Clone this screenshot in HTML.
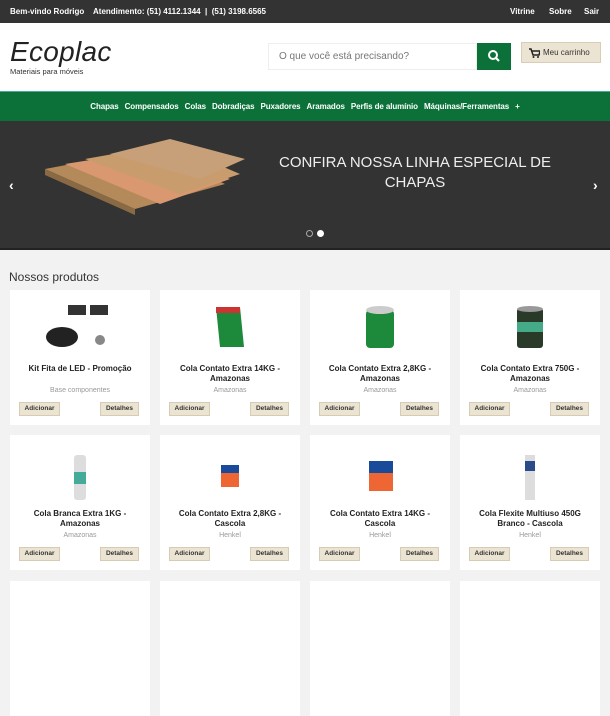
<!DOCTYPE html>
<html><head><meta charset="utf-8"><style>
*{margin:0;padding:0;box-sizing:border-box}
body{width:610px;height:609px;overflow:hidden;background:#f2f2f2;font-family:"Liberation Sans",sans-serif;position:relative}
.top{position:absolute;left:0;top:0;width:610px;height:23px;background:#333;color:#fff;font-size:8px;font-weight:bold}
.top span{position:absolute;top:7px}
.hdr{position:absolute;top:23px;left:0;width:610px;height:68px;background:#fff}
.logo{position:absolute;left:10px;top:13px;font-size:28px;color:#222;font-style:italic;letter-spacing:0.3px;font-weight:normal}
.logo small{position:absolute;left:0;top:31px;font-size:7.5px;font-style:normal;letter-spacing:0;white-space:nowrap;color:#333}
.search{position:absolute;left:268px;top:20px;width:209px;height:27px;border:1px solid #eee;background:#fff;font-size:10px;color:#777;padding:7px 10px}
.sbtn{position:absolute;left:477px;top:20px;width:34px;height:27px;background:#0b7139}
.cart{position:absolute;left:521px;top:19px;width:80px;height:21px;background:#ece4d2;border:1px solid #d8ceb8;font-size:8px;color:#333;padding:5px 0 0 21px}
.nav{position:absolute;top:91px;left:0;width:610px;height:30px;background:#0b7139;border-top:1px solid #4a9;color:#fff;font-size:8px;font-weight:bold;text-align:center;padding-top:10px;letter-spacing:-0.1px}
.nav b{margin:0 3px}
.slide{position:absolute;top:121px;left:0;width:610px;height:129px;background:#333;border-bottom:2px solid #222}
.stxt{position:absolute;left:270px;top:32px;width:290px;text-align:center;color:#eee;font-size:15px;line-height:20px}
.arr{position:absolute;top:56px;color:#fff;font-size:14px;font-weight:bold}
.h2{position:absolute;left:9px;top:270px;font-size:12px;color:#333}
.card{position:absolute;width:140px;height:135px;background:#fff}
.t{position:absolute;left:6px;right:6px;top:74px;text-align:center;font-size:8px;font-weight:bold;line-height:10px;color:#222}
.b{position:absolute;left:0;right:0;top:97px;text-align:center;font-size:7px;color:#999}
.btn{position:absolute;top:112px;height:14px;background:#ece4d2;border:1px solid #d6ccb4;font-size:6.5px;font-weight:bold;color:#333;text-align:center;line-height:12px}
.a{left:9px;width:41px}.d{left:90px;width:39px}
.img{position:absolute;left:50%;top:12px;transform:translateX(-50%)}
</style></head><body>
<div class="top"><span style="left:10px">Bem-vindo Rodrigo</span><span style="left:93px">Atendimento: (51) 4112.1344 &nbsp;| &nbsp;(51) 3198.6565</span><span style="left:510px">Vitrine</span><span style="left:549px">Sobre</span><span style="left:584px">Sair</span></div>
<div class="hdr">
<div class="logo">Ecoplac<small>Materiais para móveis</small></div>
<div class="search">O que você está precisando?</div>
<div class="sbtn"><svg width="34" height="27"><circle cx="16" cy="12" r="4" fill="none" stroke="#fff" stroke-width="2"/><line x1="19" y1="15" x2="22" y2="18" stroke="#fff" stroke-width="2.2"/></svg></div>
<div class="cart"><svg style="position:absolute;left:7px;top:5px" width="11" height="10"><path d="M0 1h2l2 6h6l1-4H3" fill="none" stroke="#222" stroke-width="1.5"/><circle cx="4.5" cy="9" r="1" fill="#222"/><circle cx="9" cy="9" r="1" fill="#222"/></svg>Meu carrinho</div>
</div>
<div class="nav"><b>Chapas</b><b>Compensados</b><b>Colas</b><b>Dobradiças</b><b>Puxadores</b><b>Aramados</b><b>Perfis de alumínio</b><b>Máquinas/Ferramentas</b><b>+</b></div>
<div class="slide">
<svg style="position:absolute;left:40px;top:18px" width="210" height="90"><polygon points="5,30 95,70 185,45 110,10" fill="#b48a5a"/><polygon points="25,25 120,65 190,40 120,10" fill="#d99870"/><polygon points="45,20 140,55 200,35 130,5" fill="#c89c6c"/><polygon points="70,15 160,40 205,20 130,0" fill="#c7a07a"/><polygon points="5,30 95,70 95,76 5,36" fill="#8a6a45"/></svg>
<div class="stxt">CONFIRA NOSSA LINHA ESPECIAL DE CHAPAS</div>
<div class="arr" style="left:9px">&#8249;</div><div class="arr" style="left:593px">&#8250;</div>
<div style="position:absolute;left:306px;top:109px;width:7px;height:7px;border:1px solid #aaa;border-radius:50%"></div>
<div style="position:absolute;left:317px;top:109px;width:7px;height:7px;background:#fff;border-radius:50%"></div>
</div>
<div class="h2">Nossos produtos</div>

<div class="card" style="left:10px;top:290px"><svg class="img" width="80" height="50"><ellipse cx="22" cy="35" rx="16" ry="10" fill="#222"/><rect x="28" y="3" width="18" height="10" fill="#333"/><rect x="50" y="3" width="18" height="10" fill="#333"/><circle cx="60" cy="38" r="5" fill="#888"/></svg><div class="t">Kit Fita de LED - Promoção</div><div class="b">Base componentes</div><div class="btn a">Adicionar</div><div class="btn d">Detalhes</div></div>
<div class="card" style="left:160px;top:290px"><svg class="img" width="40" height="50"><polygon points="6,5 30,5 34,45 10,45" fill="#1c8a3a"/><rect x="6" y="5" width="24" height="6" fill="#c33"/></svg><div class="t">Cola Contato Extra 14KG - Amazonas</div><div class="b">Amazonas</div><div class="btn a">Adicionar</div><div class="btn d">Detalhes</div></div>
<div class="card" style="left:310px;top:290px"><svg class="img" width="40" height="50"><rect x="6" y="8" width="28" height="38" rx="4" fill="#1c8a3a"/><ellipse cx="20" cy="8" rx="14" ry="4" fill="#ccc"/></svg><div class="t">Cola Contato Extra 2,8KG - Amazonas</div><div class="b">Amazonas</div><div class="btn a">Adicionar</div><div class="btn d">Detalhes</div></div>
<div class="card" style="left:460px;top:290px"><svg class="img" width="40" height="50"><rect x="7" y="6" width="26" height="40" rx="3" fill="#2a3a28"/><ellipse cx="20" cy="7" rx="13" ry="3" fill="#999"/><rect x="7" y="20" width="26" height="10" fill="#4a8"/></svg><div class="t">Cola Contato Extra 750G - Amazonas</div><div class="b">Amazonas</div><div class="btn a">Adicionar</div><div class="btn d">Detalhes</div></div>

<div class="card" style="left:10px;top:435px"><svg class="img" width="30" height="55"><rect x="9" y="8" width="12" height="45" rx="3" fill="#ddd"/><rect x="9" y="25" width="12" height="12" fill="#4a9"/></svg><div class="t">Cola Branca Extra 1KG - Amazonas</div><div class="b">Amazonas</div><div class="btn a">Adicionar</div><div class="btn d">Detalhes</div></div>
<div class="card" style="left:160px;top:435px"><svg class="img" width="30" height="50"><rect x="6" y="18" width="18" height="22" fill="#e63"/><rect x="6" y="18" width="18" height="8" fill="#1a4a9a"/></svg><div class="t">Cola Contato Extra 2,8KG - Cascola</div><div class="b">Henkel</div><div class="btn a">Adicionar</div><div class="btn d">Detalhes</div></div>
<div class="card" style="left:310px;top:435px"><svg class="img" width="40" height="50"><rect x="9" y="14" width="24" height="30" fill="#e63"/><rect x="9" y="14" width="24" height="12" fill="#1a4a9a"/></svg><div class="t">Cola Contato Extra 14KG - Cascola</div><div class="b">Henkel</div><div class="btn a">Adicionar</div><div class="btn d">Detalhes</div></div>
<div class="card" style="left:460px;top:435px"><svg class="img" width="30" height="55"><rect x="10" y="8" width="10" height="45" fill="#ddd"/><rect x="10" y="14" width="10" height="10" fill="#2a4a8a"/></svg><div class="t">Cola Flexite Multiuso 450G Branco - Cascola</div><div class="b">Henkel</div><div class="btn a">Adicionar</div><div class="btn d">Detalhes</div></div>

<div class="card" style="left:10px;top:581px"></div>
<div class="card" style="left:160px;top:581px"></div>
<div class="card" style="left:310px;top:581px"></div>
<div class="card" style="left:460px;top:581px"></div>
</body></html>
